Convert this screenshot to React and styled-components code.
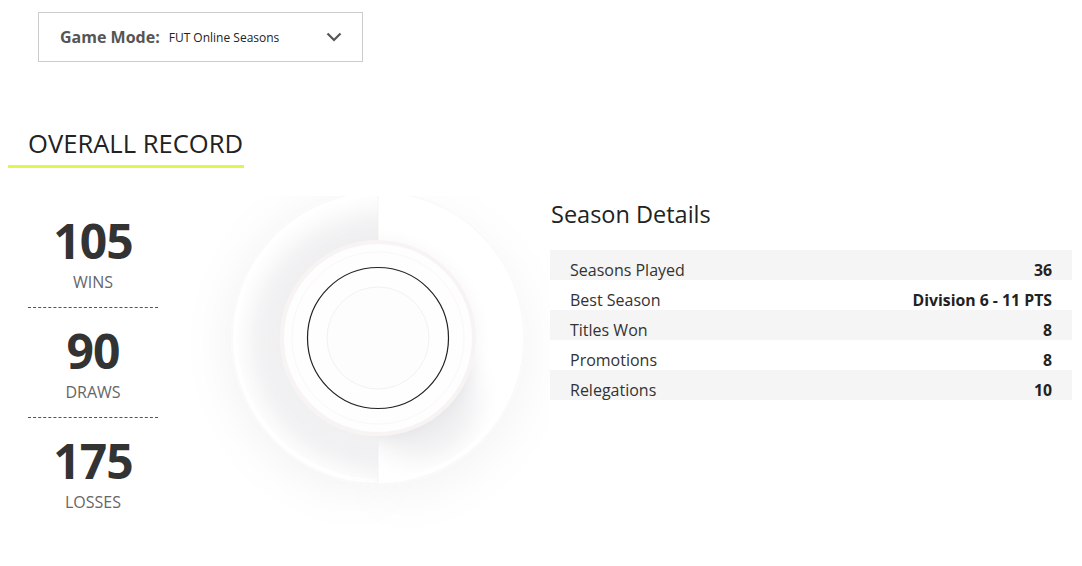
import React from "react";
import styled, { createGlobalStyle } from "styled-components";

const Global = createGlobalStyle`
  html, body { margin: 0; padding: 0; background: #fff; }
  body { font-family: "Open Sans", "Noto Sans", sans-serif; color: #222; }
`;

const Page = styled.div`
  width: 1082px;
  height: 566px;
  overflow: hidden;
  padding: 12px 10px 0 8px;
  box-sizing: border-box;
`;

const Select = styled.div`
  margin-left: 30px;
  width: 325px;
  height: 50px;
  box-sizing: border-box;
  border: 1px solid #ccc;
  display: flex;
  align-items: center;
  padding: 0 20px 0 21px;
`;

const SelectLabel = styled.span`
  font-weight: 700;
  font-size: 16px;
  color: #555;
  margin-right: 9px;
`;

const SelectValue = styled.span`
  font-size: 12px;
  color: #222;
  flex: 1;
`;

const Heading = styled.h2`
  display: inline-block;
  margin: 65px 0 0 0;
  padding: 0 1px 4px 20px;
  font-weight: 400;
  font-size: 25.6px;
  line-height: 34px;
  color: #222;
  border-bottom: 3px solid #e2f54a;
`;

const Body = styled.div`
  display: flex;
  margin-top: 28px;
`;

const Stats = styled.div`
  margin: 2px 0 0 20px;
  width: 130px;
  display: flex;
  flex-direction: column;
`;

const Stat = styled.div`
  height: 110px;
  box-sizing: border-box;
  display: flex;
  flex-direction: column;
  align-items: center;
  padding-top: 15px;
  border-bottom: ${(p) => (p.$last ? "none" : "1px dashed #555")};
`;

const StatValue = styled.div`
  font-weight: 700;
  font-size: 48px;
  line-height: 56px;
  color: #333;
  letter-spacing: -1px;
`;

const StatLabel = styled.div`
  margin-top: 2px;
  font-size: 16px;
  line-height: 22px;
  color: #666;
`;

const Chart = styled.div`
  margin-left: 17px;
  width: 375px;
  height: 335px;
`;

const Details = styled.div`
  width: 522px;
  display: flex;
  flex-direction: column;
  background: #fff;
`;

const DetailsTitle = styled.h3`
  margin: 3px 0 0 0;
  font-weight: 400;
  font-size: 23.5px;
  line-height: 30px;
  padding-left: 1px;
  color: #222;
`;

const Table = styled.div`
  margin-top: 21px;
  display: flex;
  flex-direction: column;
`;

const Row = styled.div`
  height: 30px;
  box-sizing: border-box;
  display: flex;
  align-items: flex-start;
  justify-content: space-between;
  padding: 10px 20px 0 20px;
  line-height: 20px;
  background: ${(p) => (p.$alt ? "#f5f5f5" : "#fff")};
`;

const RowLabel = styled.span`
  font-size: 16px;
  color: #333;
`;

const RowValue = styled.span`
  font-size: 15.8px;
  font-weight: 700;
  color: #222;
`;

const Chevron = () => (
  <svg width="16" height="10" viewBox="0 0 16 10">
    <path d="M1.5 1.5 L8 8 L14.5 1.5" fill="none" stroke="#555" strokeWidth="2.2" />
  </svg>
);

const cx = 203;
const cy = 142;
const halfDisc = (side, R) => {
  const s = side === "left" ? 0 : 1;
  return `M${cx} ${cy - R} A${R} ${R} 0 0 ${s} ${cx} ${cy + R} Z`;
};
const halfRing = (side, R, r) => {
  const s = side === "left" ? 0 : 1;
  const sr = side === "left" ? 1 : 0;
  return `M${cx} ${cy - R} A${R} ${R} 0 0 ${s} ${cx} ${cy + R} L${cx} ${cy + r} A${r} ${r} 0 0 ${sr} ${cx} ${cy - r} Z`;
};

const Donut = () => (
  <svg width="375" height="335" viewBox="0 0 375 335">
    <defs>
      <filter id="haloL" x="-60%" y="-60%" width="220%" height="220%">
        <feDropShadow dx="-2" dy="6" stdDeviation="24" floodColor="#000" floodOpacity="0.055" />
      </filter>
      <filter id="haloR" x="-60%" y="-60%" width="220%" height="220%">
        <feDropShadow dx="6" dy="14" stdDeviation="22" floodColor="#000" floodOpacity="0.04" />
      </filter>
      <filter id="blur12" x="-50%" y="-50%" width="200%" height="200%">
        <feGaussianBlur stdDeviation="12" />
      </filter>
      <filter id="innerSh" x="-50%" y="-50%" width="200%" height="200%">
        <feDropShadow dx="0" dy="2" stdDeviation="8" floodColor="#000" floodOpacity="0.045" />
      </filter>
      <clipPath id="bandL">
        <path d={halfRing("left", 141, 96)} />
      </clipPath>
      <clipPath id="bandR">
        <path d={halfRing("right", 141, 96)} />
      </clipPath>
    </defs>

    <path d={halfDisc("left", 146)} fill="#fff" stroke="#fbf8f8" strokeWidth="1.5" filter="url(#haloL)" />
    <path d={halfDisc("right", 146)} fill="#fff" stroke="#fbf8f8" strokeWidth="1.5" filter="url(#haloR)" />

    <g clipPath="url(#bandL)">
      <circle cx={cx} cy={cy + 4} r="112" fill="none" stroke="#eeeef0" strokeWidth="30" filter="url(#blur12)" />
    </g>
    <g clipPath="url(#bandR)">
      <circle cx={cx + 40} cy={cy + 60} r="60" fill="#efeff1" filter="url(#blur12)" />
    </g>

    <circle cx={cx} cy={cy} r="96" fill="#fefefe" stroke="#f8f4f4" strokeWidth="4" filter="url(#innerSh)" />
    <circle cx={cx} cy={cy} r="86" fill="none" stroke="#faf8f8" strokeWidth="1" />
    <circle cx={cx} cy={cy} r="51" fill="#fdfdfd" stroke="#f2f2f2" strokeWidth="1" />
    <circle cx={cx} cy={cy} r="70.5" fill="none" stroke="#222" strokeWidth="1.2" />
  </svg>
);

const stats = [
  { v: "105", l: "WINS" },
  { v: "90", l: "DRAWS" },
  { v: "175", l: "LOSSES" },
];

const rows = [
  ["Seasons Played", "36"],
  ["Best Season", "Division 6 - 11 PTS"],
  ["Titles Won", "8"],
  ["Promotions", "8"],
  ["Relegations", "10"],
];

export default function App() {
  return (
    <>
      <Global />
      <Page>
        <Select>
          <SelectLabel>Game Mode:</SelectLabel>
          <SelectValue>FUT Online Seasons</SelectValue>
          <Chevron />
        </Select>
        <Heading>OVERALL RECORD</Heading>
        <Body>
          <Stats>
            {stats.map((s, i) => (
              <Stat key={s.l} $last={i === stats.length - 1}>
                <StatValue>{s.v}</StatValue>
                <StatLabel>{s.l}</StatLabel>
              </Stat>
            ))}
          </Stats>
          <Chart>
            <Donut />
          </Chart>
          <Details>
            <DetailsTitle>Season Details</DetailsTitle>
            <Table>
              {rows.map(([k, v], i) => (
                <Row key={k} $alt={i % 2 === 0}>
                  <RowLabel>{k}</RowLabel>
                  <RowValue>{v}</RowValue>
                </Row>
              ))}
            </Table>
          </Details>
        </Body>
      </Page>
    </>
  );
}
